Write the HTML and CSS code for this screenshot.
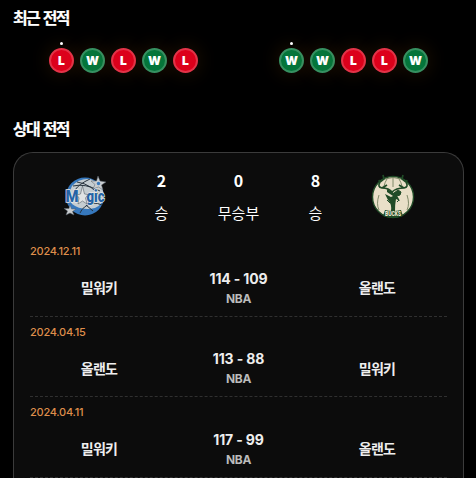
FILE: index.html
```html
<!DOCTYPE html>
<html lang="ko">
<head>
    <meta charset="UTF-8">
    <meta name="viewport" content="width=device-width, initial-scale=1.0">
    <title>상대 전적</title>
    <link rel="stylesheet" href="styles.css">
</head>
<body>
    <section class="recent">
        <h2>최근 전적</h2>
        <div class="recent-teams">
            <div class="results">
                <span class="badge lose latest">L</span>
                <span class="badge win">W</span>
                <span class="badge lose">L</span>
                <span class="badge win">W</span>
                <span class="badge lose">L</span>
            </div>
            <div class="results">
                <span class="badge win latest">W</span>
                <span class="badge win">W</span>
                <span class="badge lose">L</span>
                <span class="badge lose">L</span>
                <span class="badge win">W</span>
            </div>
        </div>
    </section>

    <section class="head-to-head">
        <h2>상대 전적</h2>
        <div class="card">
            <div class="summary">
                <svg class="logo" viewBox="0 0 44 44">
                    <circle cx="22" cy="21.500" r="19" fill="#3678bd"/>
                    <path d="M9 11Q16 3 27 4Q39 8 41 20Q40 30 32 33Q18 36 9 29Q4 20 9 11Z" fill="#c5cdd1"/>
                    <path d="M10 11Q22 8 37 16M14 7Q29 9 38 23M27 4Q16 9 12 15M17 38Q20 31 29 28Q35 28 39 30M23 30L30 36" fill="none" stroke="#28343f" stroke-width="1"/>
                    <path d="M35 1L37 6L43 7L38.500 10L40 15L35.500 12L30 14L32 9.500L28 6L33.500 6Z" fill="#c9cdd0" stroke="#555f68" stroke-width=".5"/>
                    <circle cx="35.500" cy="8.500" r="1.700" fill="#3678bd"/>
                    <path d="M7 30L8.500 34L13 34L9.500 36.500L11 40L7 38L3 40L4.500 36L1 33.500L6 33.500Z" fill="#c9cdd0" stroke="#555f68" stroke-width=".5"/>
                    <g class="magic-text">
                        <text x="2.500" y="27" textLength="13" lengthAdjust="spacingAndGlyphs">M</text>
                        <text x="23.500" y="27" textLength="18" lengthAdjust="spacingAndGlyphs">gic</text>
                    </g>
                    <path d="M19.500 11L21.500 19L25 19.500L22.500 23L24 29L19.500 26L15 29L16 23L14 20L17.500 19Z" fill="#e0e3e4" stroke="#59636b" stroke-width=".6"/>
                </svg>
                <div class="stat"><strong>2</strong><span>승</span></div>
                <div class="stat"><strong>0</strong><span>무승부</span></div>
                <div class="stat"><strong>8</strong><span>승</span></div>
                <svg class="logo" viewBox="0 0 44 44">
                    <circle cx="22" cy="22" r="20.500" fill="#e9dfc8" stroke="#204b27" stroke-width="1.400"/>
                    <path d="M14 4Q22 1 30 4M22 3V12M16 4Q14 7 13 11M28 4Q30 7 31 11M8 20Q5 29 8 35M36 20Q39 29 36 35" fill="none" stroke="#647451" stroke-width=".8"/>
                    <path d="M12 0L13 4L9 7Q6 12 11 13Q18 13 21 17Q25 13 33 13Q38 12 35 7L31 4L32 0M11 13L16 10M33 13L28 10M9 8L8 5M35 8L36 5" fill="none" stroke="#204b27" stroke-width="1.700"/>
                    <path d="M16 14Q26 18 29 26L25 24Q24 29 24 36H20Q21 29 17 25L14 19L20 22L22 21L16 17Z" fill="#204b27"/>
                    <path d="M23 18L27 15L30 17L29 20L26 21ZM16 25L19 28M26 27L28 25" fill="#204b27" stroke="#204b27" stroke-width="1"/>
                    <path d="M14 35Q22 37 30 35L32 41Q22 45 12 41Z" fill="#204b27"/>
                    <text class="bucks-text" x="14" y="41" textLength="16" lengthAdjust="spacingAndGlyphs">BUCKS</text>
                </svg>
            </div>

            <ul class="matches">
                <li class="match">
                    <div class="date">2024.12.11</div>
                    <div class="match-info">
                        <span class="team">밀워키</span>
                        <div class="score"><strong>114 - 109</strong><span>NBA</span></div>
                        <span class="team">올랜도</span>
                    </div>
                </li>
                <li class="match">
                    <div class="date">2024.04.15</div>
                    <div class="match-info">
                        <span class="team">올랜도</span>
                        <div class="score"><strong>113 - 88</strong><span>NBA</span></div>
                        <span class="team">밀워키</span>
                    </div>
                </li>
                <li class="match">
                    <div class="date">2024.04.11</div>
                    <div class="match-info">
                        <span class="team">밀워키</span>
                        <div class="score"><strong>117 - 99</strong><span>NBA</span></div>
                        <span class="team">올랜도</span>
                    </div>
                </li>
            </ul>
        </div>
    </section>
</body>
</html>
```
FILE: styles.css
```css
* {
    box-sizing: border-box;
}
body {
    margin: 0;
    padding: 8px 12px 0 13px;
    background: #000;
    color: #fff;
    font-family: Inter, "Noto Sans CJK KR", sans-serif;
}
h2 {
    margin: 0;
    font-size: 16px;
    line-height: 20px;
    font-weight: 700;
    letter-spacing: -1.7px;
    word-spacing: 1.5px;
    -webkit-text-stroke: 0.2px #fff;
}
.recent {
    height: 111px;
}
.recent-teams {
    display: flex;
    justify-content: space-between;
    padding: 20px 36px 0;
}
.results {
    display: flex;
    gap: 6px;
}
.badge {
    position: relative;
    display: flex;
    align-items: center;
    justify-content: center;
    width: 25px;
    height: 25px;
    border: 2px solid rgba(255, 255, 255, 0.2);
    border-radius: 50%;
    font-size: 12px;
    font-weight: 900;
    box-shadow: 0 0 20px rgba(255, 140, 30, 0.15);
}
.win {
    background: #04753a;
}
.lose {
    background: #dc001b;
}
.latest::before {
    content: "";
    position: absolute;
    top: -8px;
    left: 9px;
    width: 3px;
    height: 3px;
    border-radius: 50%;
    background: #fff;
}
.card {
    height: 326px;
    margin-top: 13px;
    padding: 16px 16px 0;
    border: 1px solid #3b3b3b;
    border-bottom: 0;
    border-radius: 20px 20px 0 0;
    background: #0c0c0c;
}
.summary {
    display: grid;
    grid-template-columns: repeat(5, 1fr);
    justify-items: center;
    height: 71px;
    padding: 0 16px;
}
.logo {
    width: 44px;
    height: 44px;
    margin-top: 6px;
    overflow: visible;
}
.magic-text {
    fill: #2463a6;
    stroke: #e5e7e8;
    stroke-width: 1.5px;
    paint-order: stroke;
    font: 900 17px Roboto, sans-serif;
}
.bucks-text {
    fill: #f1e9d5;
    font: 800 7px Roboto, sans-serif;
}
.stat {
    display: flex;
    flex-direction: column;
    align-items: center;
    font-family: "Noto Sans CJK KR", sans-serif;
}
.stat strong {
    font-size: 16px;
    line-height: 22px;
}
.stat span {
    margin-top: 11px;
    font-size: 15px;
    line-height: 22px;
    white-space: nowrap;
}
.matches {
    margin: 0;
    padding: 0;
    list-style: none;
}
.match {
    height: 80.4px;
    padding-top: 6.7px;
    border-bottom: 1px dashed #303030;
}
.match:first-child {
    height: 77px;
    padding-top: 3px;
}
.date {
    color: #df8e4b;
    font-size: 11px;
    line-height: 16px;
    font-weight: 500;
    letter-spacing: -0.25px;
}
.match-info {
    display: grid;
    grid-template-columns: repeat(3, 1fr);
    align-items: center;
    justify-items: center;
    height: 58px;
}
.team {
    padding: 0 1px 2px 0;
    color: #eee;
    font-size: 14px;
    font-weight: 700;
    letter-spacing: -0.7px;
}
.score {
    display: flex;
    flex-direction: column;
    align-items: center;
}
.score strong {
    color: #eee;
    font-size: 14px;
    line-height: 20px;
    font-weight: 700;
    letter-spacing: -0.15px;
}
.score span {
    color: #bbb;
    font-size: 12px;
    line-height: 19px;
    font-weight: 700;
    letter-spacing: -0.3px;
}
```
